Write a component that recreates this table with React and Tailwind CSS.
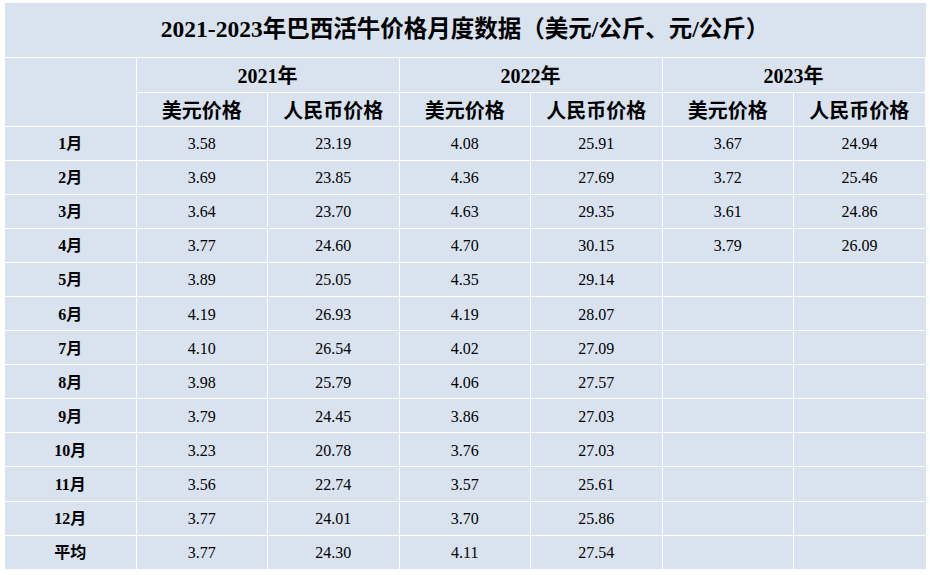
const years = ['2021年', '2022年', '2023年'];

const rows = [
  ['1月', '3.58', '23.19', '4.08', '25.91', '3.67', '24.94'],
  ['2月', '3.69', '23.85', '4.36', '27.69', '3.72', '25.46'],
  ['3月', '3.64', '23.70', '4.63', '29.35', '3.61', '24.86'],
  ['4月', '3.77', '24.60', '4.70', '30.15', '3.79', '26.09'],
  ['5月', '3.89', '25.05', '4.35', '29.14', '', ''],
  ['6月', '4.19', '26.93', '4.19', '28.07', '', ''],
  ['7月', '4.10', '26.54', '4.02', '27.09', '', ''],
  ['8月', '3.98', '25.79', '4.06', '27.57', '', ''],
  ['9月', '3.79', '24.45', '3.86', '27.03', '', ''],
  ['10月', '3.23', '20.78', '3.76', '27.03', '', ''],
  ['11月', '3.56', '22.74', '3.57', '25.61', '', ''],
  ['12月', '3.77', '24.01', '3.70', '25.86', '', ''],
  ['平均', '3.77', '24.30', '4.11', '27.54', '', ''],
];

const cell = 'border border-white text-center align-middle p-0';

export default function App() {
  return (
    <div className="bg-white w-[930px] h-[575px] pt-[3px] pl-[5px] text-black font-['Liberation_Serif','Noto_Sans_CJK_SC',serif]">
      <table className="w-[920px] table-fixed border-collapse bg-[#d9e3f0]">
        <colgroup>
          <col className="w-[131px]" />
          {[0, 1, 2, 3, 4, 5].map((i) => (
            <col key={i} className="w-[131.5px]" />
          ))}
        </colgroup>
        <tbody>
          <tr className="h-[54px]">
            <td colSpan={7} className={`${cell} border-t-0 border-l-0 border-r-0 text-[23.5px] font-bold`}>
              2021-2023年巴西活牛价格月度数据（美元/公斤、元/公斤）
            </td>
          </tr>
          <tr className="h-[35px]">
            <td rowSpan={2} className={`${cell} border-l-0`} />
            {years.map((y) => (
              <td key={y} colSpan={2} className={`${cell} pt-[2px] text-[20px] font-bold`}>
                {y}
              </td>
            ))}
          </tr>
          <tr className="h-[34px]">
            {years.map((y) => (
              <>
                <td key={y + 'a'} className={`${cell} pt-[3px] text-[20px] font-bold`}>
                  美元价格
                </td>
                <td key={y + 'b'} className={`${cell} pt-[3px] text-[20px] font-bold`}>
                  人民币价格
                </td>
              </>
            ))}
          </tr>
          {rows.map((r, ri) => (
            <tr key={r[0]} className="h-[34.1px]">
              {r.map((v, i) => (
                <td
                  key={i}
                  className={`${cell} pt-[2px] ${i === 0 ? 'border-l-0 text-[16px] font-bold' : 'text-[16px]'} ${
                    i === 6 ? 'border-r-0' : ''
                  } ${ri === rows.length - 1 ? 'border-b-0' : ''}`}
                >
                  {v}
                </td>
              ))}
            </tr>
          ))}
        </tbody>
      </table>
    </div>
  );
}
